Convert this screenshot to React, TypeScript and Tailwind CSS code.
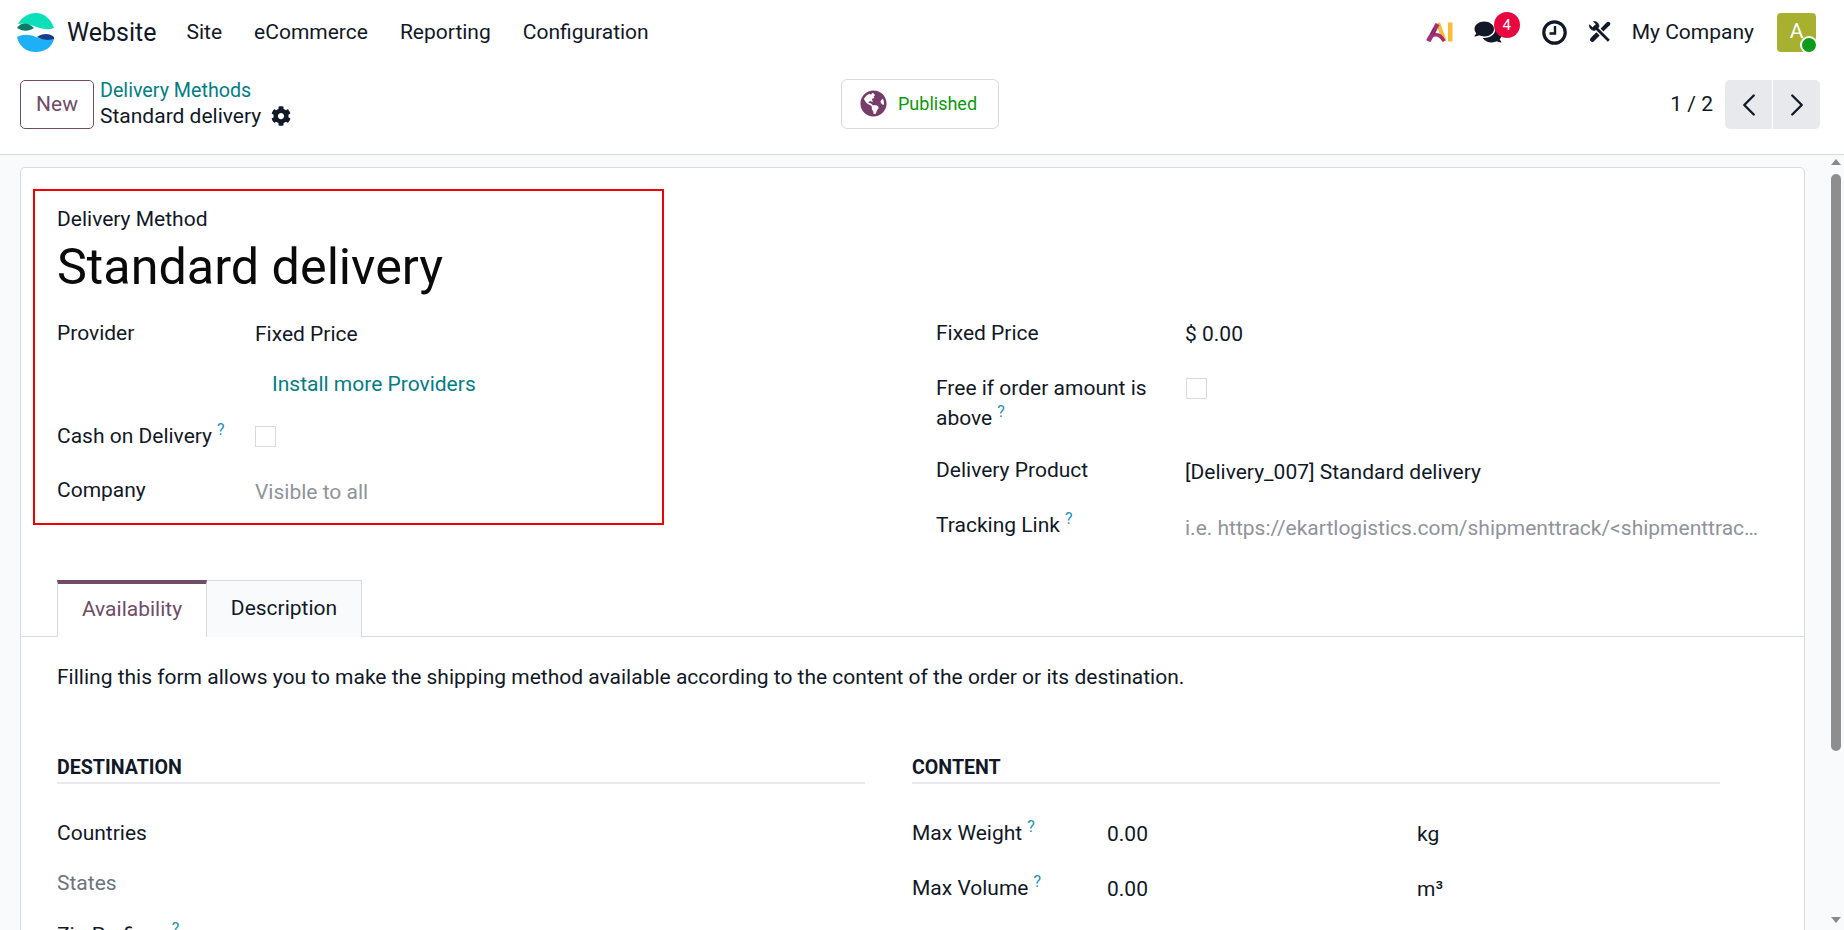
import React from 'react';
import { ChevronLeft, ChevronRight } from 'lucide-react';
import { FaCog, FaComments, FaGlobeAmericas } from 'react-icons/fa';

const Help = () => <sup className="ml-[5px] text-[16px] text-[#1a93b3]">?</sup>;

const Logo = () => (
  <svg viewBox="0 0 37 39" className="h-[39px] w-[37px]">
    <path d="M1 11C5 4 11 0 19 0C27 0 34 6 37 15C32 17 27 16 23 15C16 13 9 9 1 11Z" fill="#0be0b9" />
    <path d="M0 15C3 10 10 8 17 15C11 19 5 18 0 15Z" fill="#067c69" />
    <path d="M0 24C6 21 12 21 19 24C25 27 32 27 37 26C35 34 28 39 19 39C9 39 2 33 0 24Z" fill="#1eb0f7" />
    <path d="M20 24C25 20 33 20 37 24C37 25 37 25 37 26C31 28 25 27 20 24Z" fill="#143e8c" />
  </svg>
);

const AiIcon = () => (
  <svg viewBox="0 0 27 20" className="h-[20px] w-[27px]">
    <path d="M12 1L18.5 19" stroke="#f9bd35" strokeWidth="4.2" fill="none" />
    <path d="M11.5 2L2.5 19" stroke="#a5317d" strokeWidth="4.6" fill="none" />
    <path d="M2 19C5 11 13 10 18 19" stroke="#a5317d" strokeWidth="3.6" fill="none" />
    <path d="M8 6L5 12M10 8L7 13" stroke="#5e1f4c" strokeWidth="0.8" />
    <path d="M15 15L18 19" stroke="#c0263f" strokeWidth="2" />
    <rect x="22" y="0.5" width="4.5" height="19" fill="#f9bd35" />
  </svg>
);

const ClockIcon = () => (
  <svg viewBox="0 0 25 25" className="h-[25px] w-[25px]">
    <circle cx="12.5" cy="12.5" r="10.7" fill="none" stroke="#111827" strokeWidth="3.2" />
    <path d="M13 6V13.5H7.5" fill="none" stroke="#111827" strokeWidth="2.4" />
  </svg>
);

const ToolsIcon = () => (
  <svg viewBox="0 0 20 20" className="h-[22px] w-[22px]" fill="none" stroke="#111827">
    <path d="M11.5 8.5L17.5 2.5" strokeWidth="3.6" strokeLinecap="round" />
    <path d="M8 12L3 17" strokeWidth="4.2" strokeLinecap="round" />
    <path d="M5.5 5.5L18 18" stroke="#ffffff" strokeWidth="5" />
    <path d="M5.5 5.5L18 18" strokeWidth="2.6" />
    <path d="M0.5 3.5C0 6.5 2.5 9 5.5 8.5L9 5.5C9.5 2.5 7 0 4 0.5L6.5 3L3.2 6Z" fill="#111827" strokeWidth="0.6" />
  </svg>
);

const Checkbox = () => <div className="h-[21px] w-[21px] border border-[#d8dadd] bg-white" />;

export default function App() {
  return (
    <div className="flex h-screen w-full flex-col overflow-hidden bg-white font-['Roboto',sans-serif] text-[21px] text-[#111827]">
      {/* top nav */}
      <div className="flex h-[64px] shrink-0 items-center pl-[17px] pr-[28px]">
        <Logo />
        <span className="ml-[13px] mt-px text-[25px]">Website</span>
        <div className="ml-[30px] mt-px flex gap-[32px]">
          <span>Site</span>
          <span>eCommerce</span>
          <span>Reporting</span>
          <span>Configuration</span>
        </div>
        <div className="ml-auto flex items-center">
          <AiIcon />
          <div className="relative ml-[21px] text-[#111827]">
            <FaComments className="h-[24px] w-[28px]" />
            <span className="absolute -top-[8px] left-[20px] flex h-[26px] w-[26px] items-center justify-center rounded-full bg-[#e8073f] text-[15px] text-white">4</span>
          </div>
          <div className="ml-[40px]"><ClockIcon /></div>
          <div className="ml-[22px]"><ToolsIcon /></div>
          <span className="ml-[21px] mt-px">My Company</span>
          <div className="relative ml-[23px] flex h-[39px] w-[39px] items-center justify-center rounded-[4px] bg-[#a8b12f] text-[21px] text-white">
            A
            <span className="absolute -bottom-[2px] -right-[2px] h-[18px] w-[18px] rounded-full border-2 border-white bg-[#0d9b1c]" />
          </div>
        </div>
      </div>

      {/* control panel */}
      <div className="flex h-[91px] shrink-0 items-start border-b border-[#d8dadd] pl-[20px] pr-[24px] pt-[16px]">
        <div className="flex w-[821px] items-start">
          <button className="h-[49px] w-[74px] rounded-[5px] border border-[#714b67] text-[#714b67]">New</button>
          <div className="-mt-[3px] ml-[6px] leading-[26px]">
            <div className="h-[26px] pt-px text-[19.7px] text-[#017e84]">Delivery Methods</div>
            <div className="flex items-center">
              Standard delivery
              <FaCog className="ml-[10px] h-[20px] w-[20px]" />
            </div>
          </div>
        </div>
        <div className="-mt-px flex h-[50px] w-[158px] items-center rounded-[6px] border border-[#d8dadd] pb-px pl-[18px] text-[18px] text-[#0a9a0a]">
          <FaGlobeAmericas className="h-[27px] w-[27px] text-[#773d6a]" />
          <span className="ml-[11px]">Published</span>
        </div>
        <div className="ml-auto flex items-center">
          <span className="mr-[12px]">1 / 2</span>
          <div className="flex h-[49px] w-[47px] items-center justify-center rounded-l-[5px] bg-[#e7e9ed]">
            <ChevronLeft className="h-[38px] w-[38px]" strokeWidth={1.5} />
          </div>
          <div className="ml-px flex h-[49px] w-[47px] items-center justify-center rounded-r-[5px] bg-[#e7e9ed]">
            <ChevronRight className="h-[38px] w-[38px]" strokeWidth={1.5} />
          </div>
        </div>
      </div>

      {/* scrolling content */}
      <div className="flex min-h-0 flex-1 bg-[#f9fafb]">
        <div className="min-w-0 flex-1 overflow-hidden pl-[20px] pt-[12px]">
          <div className="h-[900px] w-[1785px] rounded-t-[5px] border border-[#d8dadd] bg-white leading-[30px]">
            <div className="ml-[12px] mt-[21px] flex items-start">
              {/* highlighted block */}
              <div className="w-[631px] border-2 border-[#f00000] pb-[16px] pl-[22px] pt-[15px]">
                <div className="leading-[26px]">Delivery Method</div>
                <div className="mt-[5px] text-[50.3px] leading-[60px] text-[#0a0a0a]">Standard delivery</div>
                <div className="mt-[21px] flex">
                  <div className="w-[198px]">Provider</div>
                  <div className="mt-px">Fixed Price</div>
                </div>
                <div className="mt-[20px] pl-[215px] text-[#017e84]">Install more Providers</div>
                <div className="mt-[22px] flex items-center">
                  <div className="w-[198px]">Cash on Delivery<Help /></div>
                  <Checkbox />
                </div>
                <div className="mt-[24px] flex">
                  <div className="w-[198px]">Company</div>
                  <div className="mt-[2px] text-[#8f939b]">Visible to all</div>
                </div>
              </div>

              <div className="ml-[272px] w-[826px] pt-[129px]">
                <div className="flex">
                  <div className="w-[249px]">Fixed Price</div>
                  <div className="mt-px">$ 0.00</div>
                </div>
                <div className="mt-[24px] flex">
                  <div className="w-[249px]">Free if order amount is<br />above<Help /></div>
                  <div className="ml-px mt-[5px]"><Checkbox /></div>
                </div>
                <div className="mt-[22px] flex">
                  <div className="w-[249px]">Delivery Product</div>
                  <div className="mt-[2px]">[Delivery_007] Standard delivery</div>
                </div>
                <div className="mt-[23px] flex">
                  <div className="w-[249px]">Tracking Link<Help /></div>
                  <div className="mt-[3px] w-[577px] truncate text-[#8f939b]">i.e. https://ekartlogistics.com/shipmenttrack/&lt;shipmenttracking_number&gt;</div>
                </div>
              </div>
            </div>

            {/* tabs */}
            <div className="mt-[37px] flex h-[57px] items-end border-b border-[#d8dadd] pl-[36px]">
              <div className="-mb-px flex h-[57px] w-[150px] items-center justify-center border-x border-t-4 border-x-[#d8dadd] border-t-[#714b67] bg-white pb-[3px] text-[#714b67]">Availability</div>
              <div className="-mb-px flex h-[57px] w-[155px] items-center justify-center border-r border-t border-[#d8dadd] bg-[#f9fafb] pb-[3px]">Description</div>
            </div>

            <div className="pl-[36px] pt-[25px]">
              <p>Filling this form allows you to make the shipping method available according to the content of the order or its destination.</p>
              <div className="mt-[60px] flex">
                <div className="w-[808px]">
                  <div className="h-[32px] border-b-2 border-[#e7e9ed] pt-px text-[19.6px] font-bold">DESTINATION</div>
                  <div className="mt-[34px]">Countries</div>
                  <div className="mt-[20px] text-[#6c757d]">States</div>
                  <div className="mt-[22px]">Zip Prefixes<Help /></div>
                </div>
                <div className="ml-[47px] w-[808px]">
                  <div className="h-[32px] border-b-2 border-[#e7e9ed] pt-px text-[19.6px] font-bold">CONTENT</div>
                  <div className="mt-[34px] flex">
                    <div className="w-[195px]">Max Weight<Help /></div>
                    <div className="mt-px w-[310px]">0.00</div>
                    <div className="mt-px">kg</div>
                  </div>
                  <div className="mt-[24px] flex">
                    <div className="w-[195px]">Max Volume<Help /></div>
                    <div className="mt-px w-[310px]">0.00</div>
                    <div className="mt-px">m³</div>
                  </div>
                </div>
              </div>
            </div>
          </div>
        </div>

        {/* scrollbar */}
        <div className="flex w-[16px] shrink-0 flex-col items-center pt-[4px]">
          <svg viewBox="0 0 10 6" className="h-[6px] w-[10px]"><path d="M5 0L10 6H0Z" fill="#8a8a8a" /></svg>
          <div className="mt-[9px] h-[577px] w-[10px] rounded-[5px] bg-[#8e8e8e]" />
          <svg viewBox="0 0 10 6" className="mt-[166px] h-[6px] w-[10px]"><path d="M0 0H10L5 6Z" fill="#8a8a8a" /></svg>
        </div>
      </div>
    </div>
  );
}
